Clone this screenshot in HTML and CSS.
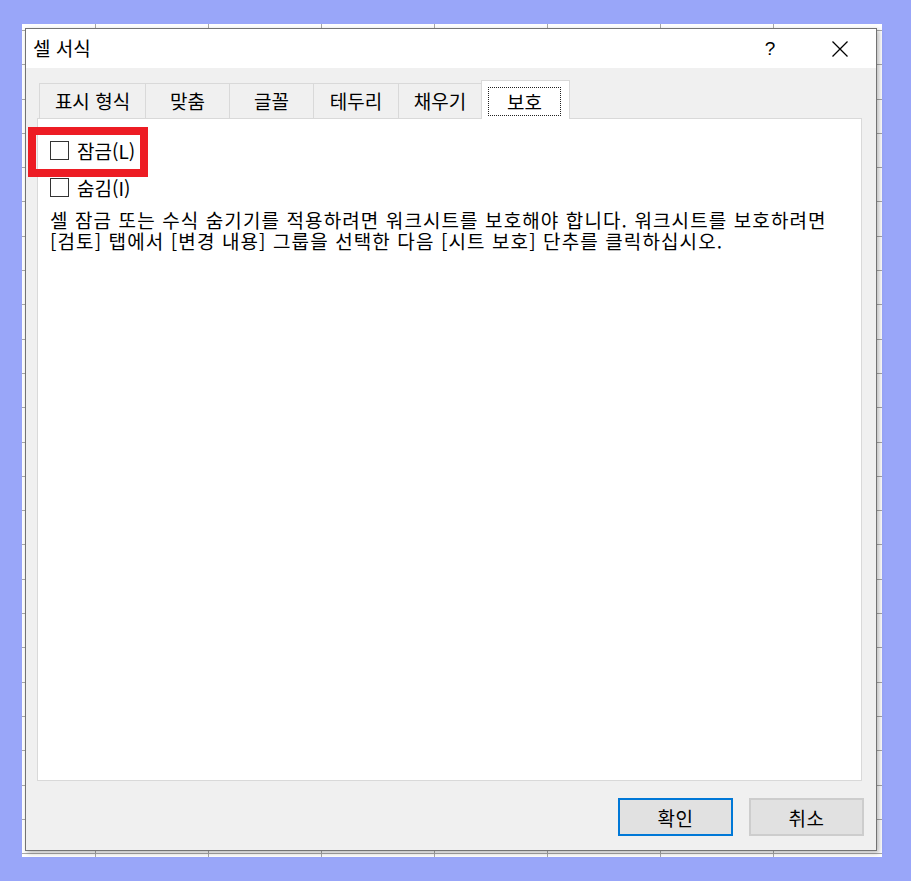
FILE: index.html
```html
<!DOCTYPE html>
<html lang="ko">
<head>
<meta charset="utf-8">
<title>셀 서식</title>
<link rel="stylesheet" href="styles.css">
</head>
<body>
<div class="sheet">
  <div class="dialog">
    <div class="titlebar">
      <span class="title">셀 서식</span>
      <span class="help">?</span>
      <span class="close"><svg width="16" height="16" viewBox="0 0 16 16"><path d="M0.5 0.5 L15.5 15.5 M15.5 0.5 L0.5 15.5" stroke="#000" stroke-width="1.3" fill="none"/></svg></span>
    </div>
    <div class="body">
      <div class="tabs">
        <div class="tab w1">표시 형식</div>
        <div class="tab w2">맞춤</div>
        <div class="tab w3">글꼴</div>
        <div class="tab w4">테두리</div>
        <div class="tab w5">채우기</div>
        <div class="tab active"><span class="focus">보호</span></div>
      </div>
      <div class="panel">
        <div class="highlight"></div>
        <div class="check"><span class="box"></span><span class="label">잠금(L)</span></div>
        <div class="check second"><span class="box"></span><span class="label">숨김(I)</span></div>
        <p class="desc">셀 잠금 또는 수식 숨기기를 적용하려면 워크시트를 보호해야 합니다. 워크시트를 보호하려면<br>[검토] 탭에서 [변경 내용] 그룹을 선택한 다음 [시트 보호] 단추를 클릭하십시오.</p>
      </div>
      <div class="buttons">
        <button class="btn primary">확인</button>
        <button class="btn">취소</button>
      </div>
    </div>
  </div>
</div>
</body>
</html>
```

FILE: styles.css
```css
* { box-sizing: border-box; }
html, body { margin: 0; padding: 0; }
body {
  background: #99a6f9;
  font-family: "Noto Sans CJK KR", "Noto Sans", sans-serif;
  color: #000;
  width: 911px;
  height: 881px;
  overflow: hidden;
}
.sheet {
  margin: 24px 0 0 22px;
  width: 860px;
  height: 833px;
  padding: 4px 5px 6px 3px;
  background-color: #fff;
  background-image:
    repeating-linear-gradient(to right, transparent 0 73px, #a8a8a8 73px 74px, transparent 74px 113px),
    repeating-linear-gradient(to bottom, transparent 0 6px, #a8a8a8 6px 7px, transparent 7px 34.3px);
}
.dialog {
  width: 852px;
  height: 823px;
  border: 1px solid #737373;
  background: #f0f0f0;
  box-shadow: 2px 2px 5px rgba(0,0,0,0.28);
  display: flex;
  flex-direction: column;
}
.titlebar {
  height: 39px;
  background: #fff;
  display: flex;
  align-items: center;
  font-size: 19px;
  flex: none;
}
.title { flex: 1; padding-left: 7px; padding-bottom: 2px; }
.help {
  width: 46px;
  text-align: center;
  font-family: "Liberation Sans", sans-serif;
  font-size: 19px;
}
.close {
  width: 46px;
  margin-left: 24px;
  margin-right: 13px;
  display: flex;
  justify-content: center;
}
.body {
  flex: 1;
  display: flex;
  flex-direction: column;
  padding: 12px 14px 14px 11px;
}
.tabs {
  height: 38px;
  display: flex;
  align-items: flex-end;
  padding-left: 2px;
  flex: none;
}
.tab {
  height: 35px;
  border-top: 1px solid #d9d9d9;
  border-left: 1px solid #d9d9d9;
  background: #f0f0f0;
  display: flex;
  align-items: center;
  justify-content: center;
  font-size: 19px;
  padding-bottom: 1px;
}
.w1 { width: 106px; }
.w2 { width: 84px; }
.w3 { width: 84px; }
.w4 { width: 85px; }
.w5 { width: 83px; }
.tab.active {
  width: 89px;
  height: 39px;
  margin-bottom: -1px;
  border-right: 1px solid #d9d9d9;
  background: #fff;
  position: relative;
  z-index: 1;
  padding: 6px 8px 3px 6px;
  align-items: stretch;
}
.focus {
  flex: 1;
  border: 1px dotted #222;
  display: flex;
  align-items: center;
  justify-content: center;
}
.panel {
  flex: 1;
  background: #fff;
  border: 1px solid #d9d9d9;
  position: relative;
  padding: 20px 12px 0 12px;
}
.highlight {
  position: absolute;
  left: -10px;
  top: 8px;
  width: 120px;
  height: 50px;
  border: 8px solid #ed1c24;
  z-index: 2;
}
.check {
  height: 22px;
  display: flex;
  align-items: center;
  font-size: 19px;
}
.check.second { margin-top: 15px; }
.box {
  width: 19px;
  height: 19px;
  border: 1px solid #333;
  background: #fff;
  margin-right: 8px;
  flex: none;
}
.desc {
  margin: 11px 0 0 0;
  font-size: 19px;
  line-height: 21px;
  letter-spacing: 1.1px;
  white-space: nowrap;
}
.buttons {
  flex: none;
  margin-top: 17px;
  margin-right: -2px;
  display: flex;
  justify-content: flex-end;
  gap: 16px;
}
.btn {
  width: 115px;
  height: 38px;
  background: #e1e1e1;
  border: 2px solid #cdcdcd;
  font-family: "Noto Sans CJK KR", "Noto Sans", sans-serif;
  font-size: 19px;
  letter-spacing: 0.5px;
  color: #000;
  padding: 0;
}
.btn.primary { border-color: #0078d7; }
```
